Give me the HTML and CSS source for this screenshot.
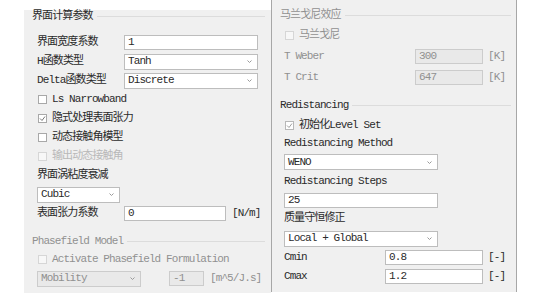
FILE: index.html
```html
<!DOCTYPE html>
<html lang="zh-CN">
<head>
    <meta charset="UTF-8">
    <title>界面计算参数</title>
    <link rel="stylesheet" href="styles.css">
</head>
<body>
<div class="panel">

    <!-- 左侧: 界面计算参数 -->
    <div class="col col-left">
        <div class="group-title">界面计算参数</div>

        <div class="row first">
            <span class="lbl">界面宽度系数</span>
            <div class="field w-main">1</div>
        </div>
        <div class="row">
            <span class="lbl">H函数类型</span>
            <div class="field select w-main"><span>Tanh</span><svg class="arrow" width="5" height="3"><polyline points="0.5,0.5 2.5,2.5 4.5,0.5"/></svg></div>
        </div>
        <div class="row">
            <span class="lbl">Delta函数类型</span>
            <div class="field select w-main"><span>Discrete</span><svg class="arrow" width="5" height="3"><polyline points="0.5,0.5 2.5,2.5 4.5,0.5"/></svg></div>
        </div>

        <div class="row check"><span class="box"></span>Ls Narrowband</div>
        <div class="row check"><span class="box"><svg width="7" height="7"><polyline points="1,3.5 3,5.5 6,1.5"/></svg></span>隐式处理表面张力</div>
        <div class="row check"><span class="box"></span>动态接触角模型</div>
        <div class="row check off light"><span class="box"></span>输出动态接触角</div>

        <div class="row">界面涡粘度衰减</div>
        <div class="row">
            <div class="field select w-cubic"><span>Cubic</span><svg class="arrow" width="5" height="3"><polyline points="0.5,0.5 2.5,2.5 4.5,0.5"/></svg></div>
        </div>
        <div class="row">
            <span class="lbl">表面张力系数</span>
            <div class="field w-tension">0</div>
            <span class="unit">[N/m]</span>
        </div>

        <div class="group-title off phase">Phasefield Model</div>
        <div class="row check off act"><span class="box"></span>Activate Phasefield Formulation</div>
        <div class="row off">
            <div class="field select disabled w-mob"><span>Mobility</span><svg class="arrow" width="5" height="3"><polyline points="0.5,0.5 2.5,2.5 4.5,0.5"/></svg></div>
            <div class="field disabled w-neg">-1</div>
            <span class="unit">[m^5/J.s]</span>
        </div>
    </div>

    <!-- 右侧: 马兰戈尼 / Redistancing -->
    <div class="col col-right">
        <div class="group-title off">马兰戈尼效应</div>
        <div class="row check off marangoni"><span class="box"></span>马兰戈尼</div>
        <div class="row tall off">
            <span class="lbl-t">T Weber</span>
            <div class="field disabled w-t">300</div>
            <span class="unit">[K]</span>
        </div>
        <div class="row tall off">
            <span class="lbl-t">T Crit</span>
            <div class="field disabled w-t">647</div>
            <span class="unit">[K]</span>
        </div>

        <div class="group-title redist">Redistancing</div>
        <div class="row check h18 init"><span class="box dim"><svg width="7" height="7"><polyline points="1,3.5 3,5.5 6,1.5"/></svg></span>初始化Level Set</div>
        <div class="row h18">Redistancing Method</div>
        <div class="row h18 mt1">
            <div class="field select w-wide"><span>WENO</span><svg class="arrow" width="5" height="3"><polyline points="0.5,0.5 2.5,2.5 4.5,0.5"/></svg></div>
        </div>
        <div class="row mt1">Redistancing Steps</div>
        <div class="row h18">
            <div class="field w-wide">25</div>
        </div>
        <div class="row h18">质量守恒修正</div>
        <div class="row mt2">
            <div class="field select w-wide"><span>Local + Global</span><svg class="arrow" width="5" height="3"><polyline points="0.5,0.5 2.5,2.5 4.5,0.5"/></svg></div>
        </div>
        <div class="row">
            <span class="lbl-c">Cmin</span>
            <div class="field w-c">0.8</div>
            <span class="unit">[-]</span>
        </div>
        <div class="row">
            <span class="lbl-c">Cmax</span>
            <div class="field w-c">1.2</div>
            <span class="unit">[-]</span>
        </div>
    </div>

</div>
</body>
</html>
```

FILE: styles.css
```css
body {
    margin: 0;
    background: #fff;
    color: #2a2a2a;
    font-family: "Liberation Mono", "Noto Sans CJK SC", monospace;
    font-size: 11px;
    line-height: 1;
    letter-spacing: -0.9px;
}

.panel { display: flex; margin-left: 24px; }

.col { background: #f0f0f0; box-sizing: border-box; }
.col-left { width: 247px; height: 283px; margin-top: 10px; padding: 0 6px 0 13px; }
.col-right {
    width: 246px;
    height: 292px;
    padding: 9px 5px 0 12px;
    border-left: 1px solid #a7a7a7;
    border-right: 1px solid #a7a7a7;
}

/* 分组标题 + 横线 */
.group-title {
    display: flex;
    align-items: center;
    height: 12px;
    gap: 4px;
    white-space: nowrap;
}
.group-title::after { content: ""; flex: 1; border-top: 1px solid #dcdcdc; }
.col-left .group-title { margin-left: -5px; }
.col-right .group-title { margin-left: -4px; }
.group-title.phase { margin-top: 12px; }
.group-title.redist { margin-top: 12px; }

.row { display: flex; align-items: center; height: 19px; white-space: nowrap; }
.row.first { margin-top: 11px; }
.row.tall { height: 20px; margin-top: 1px; }
.row.h18 { height: 18px; }
.row.mt1 { margin-top: 1px; }
.row.mt2 { margin-top: 2px; }
.row.act { margin-top: 3px; }
.row.marangoni { margin-top: 5px; }
.row.init { margin-top: 5px; }

.off { color: #909090; }
.light { color: #b8b8b8; }

.lbl { width: 87px; }
.lbl-t { width: 131px; }
.lbl-c { width: 101px; }

/* 输入框 / 下拉框 */
.field {
    box-sizing: border-box;
    display: flex;
    align-items: center;
    height: 15px;
    padding-left: 3px;
    background: #fff;
    border: 1px solid #bdbdbd;
    color: #2a2a2a;
}
.select { height: 16px; justify-content: space-between; padding-right: 5px; }
.arrow { fill: none; stroke: #9a9a9a; stroke-width: 1; }
.field.disabled { background: #e9e9e9; border-color: #cccccc; color: #909090; }

.w-main { width: 134px; }
.w-cubic { width: 83px; }
.w-tension { width: 102px; }
.w-mob { width: 104px; }
.w-neg { width: 35px; margin-left: 28px; }
.w-t { width: 68px; }
.w-c { width: 98px; }
.w-wide { width: 154px; }

.unit { margin-left: 6px; }
.col-right .unit { margin-left: 5px; }

/* 复选框 */
.check .box {
    box-sizing: border-box;
    width: 9px;
    height: 9px;
    margin: 0 5px 0 1px;
    background: #fff;
    border: 1px solid #a8a8a8;
    display: flex;
    align-items: center;
    justify-content: center;
}
.check .box svg { fill: none; stroke: #777; stroke-width: 1; }
.check.off .box { border-color: #d6d6d6; background: #f7f7f7; }
.check .box.dim { border-color: #b8b8b8; }
.check .box.dim svg { stroke: #a0a0a0; }
```
